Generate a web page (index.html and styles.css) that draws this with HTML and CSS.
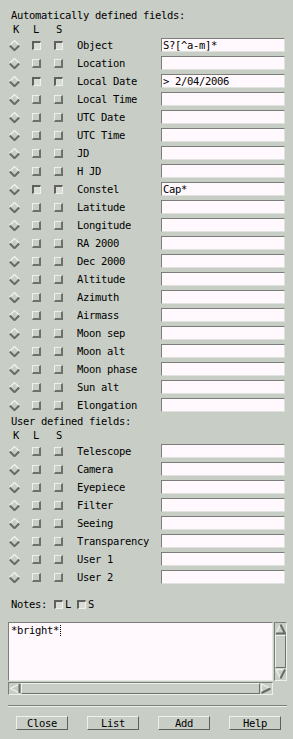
FILE: index.html
```html
<!DOCTYPE html>
<html>
<head>
<meta charset="utf-8">
<link rel="stylesheet" href="styles.css">
</head>
<body>
<div class="panel">
  <div class="title">Automatically defined fields:</div>
  <div class="row head"><span class="k">K</span><span class="l">L</span><span class="s">S</span></div>

  <div class="row"><svg class="dia" viewBox="0 0 11 11"><polyline points="0.5,5.5 5.5,0.5 10.5,5.5" class="hi"/><polyline points="0.8,5.5 5.5,10.2 10.2,5.5" class="lo"/></svg><span class="cb on"></span><span class="cb on"></span><span class="lab">Object</span><div class="entry">S?[^a-m]*</div></div>
  <div class="row"><svg class="dia" viewBox="0 0 11 11"><polyline points="0.5,5.5 5.5,0.5 10.5,5.5" class="hi"/><polyline points="0.8,5.5 5.5,10.2 10.2,5.5" class="lo"/></svg><span class="cb"></span><span class="cb"></span><span class="lab">Location</span><div class="entry"></div></div>
  <div class="row"><svg class="dia" viewBox="0 0 11 11"><polyline points="0.5,5.5 5.5,0.5 10.5,5.5" class="hi"/><polyline points="0.8,5.5 5.5,10.2 10.2,5.5" class="lo"/></svg><span class="cb on"></span><span class="cb on"></span><span class="lab">Local Date</span><div class="entry">&gt; 2/04/2006</div></div>
  <div class="row"><svg class="dia" viewBox="0 0 11 11"><polyline points="0.5,5.5 5.5,0.5 10.5,5.5" class="hi"/><polyline points="0.8,5.5 5.5,10.2 10.2,5.5" class="lo"/></svg><span class="cb"></span><span class="cb"></span><span class="lab">Local Time</span><div class="entry"></div></div>
  <div class="row"><svg class="dia" viewBox="0 0 11 11"><polyline points="0.5,5.5 5.5,0.5 10.5,5.5" class="hi"/><polyline points="0.8,5.5 5.5,10.2 10.2,5.5" class="lo"/></svg><span class="cb"></span><span class="cb"></span><span class="lab">UTC Date</span><div class="entry"></div></div>
  <div class="row"><svg class="dia" viewBox="0 0 11 11"><polyline points="0.5,5.5 5.5,0.5 10.5,5.5" class="hi"/><polyline points="0.8,5.5 5.5,10.2 10.2,5.5" class="lo"/></svg><span class="cb"></span><span class="cb"></span><span class="lab">UTC Time</span><div class="entry"></div></div>
  <div class="row"><svg class="dia" viewBox="0 0 11 11"><polyline points="0.5,5.5 5.5,0.5 10.5,5.5" class="hi"/><polyline points="0.8,5.5 5.5,10.2 10.2,5.5" class="lo"/></svg><span class="cb"></span><span class="cb"></span><span class="lab">JD</span><div class="entry"></div></div>
  <div class="row"><svg class="dia" viewBox="0 0 11 11"><polyline points="0.5,5.5 5.5,0.5 10.5,5.5" class="hi"/><polyline points="0.8,5.5 5.5,10.2 10.2,5.5" class="lo"/></svg><span class="cb"></span><span class="cb"></span><span class="lab">H JD</span><div class="entry"></div></div>
  <div class="row"><svg class="dia" viewBox="0 0 11 11"><polyline points="0.5,5.5 5.5,0.5 10.5,5.5" class="hi"/><polyline points="0.8,5.5 5.5,10.2 10.2,5.5" class="lo"/></svg><span class="cb on"></span><span class="cb on"></span><span class="lab">Constel</span><div class="entry">Cap*</div></div>
  <div class="row"><svg class="dia" viewBox="0 0 11 11"><polyline points="0.5,5.5 5.5,0.5 10.5,5.5" class="hi"/><polyline points="0.8,5.5 5.5,10.2 10.2,5.5" class="lo"/></svg><span class="cb"></span><span class="cb"></span><span class="lab">Latitude</span><div class="entry"></div></div>
  <div class="row"><svg class="dia" viewBox="0 0 11 11"><polyline points="0.5,5.5 5.5,0.5 10.5,5.5" class="hi"/><polyline points="0.8,5.5 5.5,10.2 10.2,5.5" class="lo"/></svg><span class="cb"></span><span class="cb"></span><span class="lab">Longitude</span><div class="entry"></div></div>
  <div class="row"><svg class="dia" viewBox="0 0 11 11"><polyline points="0.5,5.5 5.5,0.5 10.5,5.5" class="hi"/><polyline points="0.8,5.5 5.5,10.2 10.2,5.5" class="lo"/></svg><span class="cb"></span><span class="cb"></span><span class="lab">RA 2000</span><div class="entry"></div></div>
  <div class="row"><svg class="dia" viewBox="0 0 11 11"><polyline points="0.5,5.5 5.5,0.5 10.5,5.5" class="hi"/><polyline points="0.8,5.5 5.5,10.2 10.2,5.5" class="lo"/></svg><span class="cb"></span><span class="cb"></span><span class="lab">Dec 2000</span><div class="entry"></div></div>
  <div class="row"><svg class="dia" viewBox="0 0 11 11"><polyline points="0.5,5.5 5.5,0.5 10.5,5.5" class="hi"/><polyline points="0.8,5.5 5.5,10.2 10.2,5.5" class="lo"/></svg><span class="cb"></span><span class="cb"></span><span class="lab">Altitude</span><div class="entry"></div></div>
  <div class="row"><svg class="dia" viewBox="0 0 11 11"><polyline points="0.5,5.5 5.5,0.5 10.5,5.5" class="hi"/><polyline points="0.8,5.5 5.5,10.2 10.2,5.5" class="lo"/></svg><span class="cb"></span><span class="cb"></span><span class="lab">Azimuth</span><div class="entry"></div></div>
  <div class="row"><svg class="dia" viewBox="0 0 11 11"><polyline points="0.5,5.5 5.5,0.5 10.5,5.5" class="hi"/><polyline points="0.8,5.5 5.5,10.2 10.2,5.5" class="lo"/></svg><span class="cb"></span><span class="cb"></span><span class="lab">Airmass</span><div class="entry"></div></div>
  <div class="row"><svg class="dia" viewBox="0 0 11 11"><polyline points="0.5,5.5 5.5,0.5 10.5,5.5" class="hi"/><polyline points="0.8,5.5 5.5,10.2 10.2,5.5" class="lo"/></svg><span class="cb"></span><span class="cb"></span><span class="lab">Moon sep</span><div class="entry"></div></div>
  <div class="row"><svg class="dia" viewBox="0 0 11 11"><polyline points="0.5,5.5 5.5,0.5 10.5,5.5" class="hi"/><polyline points="0.8,5.5 5.5,10.2 10.2,5.5" class="lo"/></svg><span class="cb"></span><span class="cb"></span><span class="lab">Moon alt</span><div class="entry"></div></div>
  <div class="row"><svg class="dia" viewBox="0 0 11 11"><polyline points="0.5,5.5 5.5,0.5 10.5,5.5" class="hi"/><polyline points="0.8,5.5 5.5,10.2 10.2,5.5" class="lo"/></svg><span class="cb"></span><span class="cb"></span><span class="lab">Moon phase</span><div class="entry"></div></div>
  <div class="row"><svg class="dia" viewBox="0 0 11 11"><polyline points="0.5,5.5 5.5,0.5 10.5,5.5" class="hi"/><polyline points="0.8,5.5 5.5,10.2 10.2,5.5" class="lo"/></svg><span class="cb"></span><span class="cb"></span><span class="lab">Sun alt</span><div class="entry"></div></div>
  <div class="row"><svg class="dia" viewBox="0 0 11 11"><polyline points="0.5,5.5 5.5,0.5 10.5,5.5" class="hi"/><polyline points="0.8,5.5 5.5,10.2 10.2,5.5" class="lo"/></svg><span class="cb"></span><span class="cb"></span><span class="lab">Elongation</span><div class="entry"></div></div>

  <div class="title">User defined fields:</div>
  <div class="row head"><span class="k">K</span><span class="l">L</span><span class="s">S</span></div>

  <div class="row"><svg class="dia" viewBox="0 0 11 11"><polyline points="0.5,5.5 5.5,0.5 10.5,5.5" class="hi"/><polyline points="0.8,5.5 5.5,10.2 10.2,5.5" class="lo"/></svg><span class="cb"></span><span class="cb"></span><span class="lab">Telescope</span><div class="entry"></div></div>
  <div class="row"><svg class="dia" viewBox="0 0 11 11"><polyline points="0.5,5.5 5.5,0.5 10.5,5.5" class="hi"/><polyline points="0.8,5.5 5.5,10.2 10.2,5.5" class="lo"/></svg><span class="cb"></span><span class="cb"></span><span class="lab">Camera</span><div class="entry"></div></div>
  <div class="row"><svg class="dia" viewBox="0 0 11 11"><polyline points="0.5,5.5 5.5,0.5 10.5,5.5" class="hi"/><polyline points="0.8,5.5 5.5,10.2 10.2,5.5" class="lo"/></svg><span class="cb"></span><span class="cb"></span><span class="lab">Eyepiece</span><div class="entry"></div></div>
  <div class="row"><svg class="dia" viewBox="0 0 11 11"><polyline points="0.5,5.5 5.5,0.5 10.5,5.5" class="hi"/><polyline points="0.8,5.5 5.5,10.2 10.2,5.5" class="lo"/></svg><span class="cb"></span><span class="cb"></span><span class="lab">Filter</span><div class="entry"></div></div>
  <div class="row"><svg class="dia" viewBox="0 0 11 11"><polyline points="0.5,5.5 5.5,0.5 10.5,5.5" class="hi"/><polyline points="0.8,5.5 5.5,10.2 10.2,5.5" class="lo"/></svg><span class="cb"></span><span class="cb"></span><span class="lab">Seeing</span><div class="entry"></div></div>
  <div class="row"><svg class="dia" viewBox="0 0 11 11"><polyline points="0.5,5.5 5.5,0.5 10.5,5.5" class="hi"/><polyline points="0.8,5.5 5.5,10.2 10.2,5.5" class="lo"/></svg><span class="cb"></span><span class="cb"></span><span class="lab">Transparency</span><div class="entry"></div></div>
  <div class="row"><svg class="dia" viewBox="0 0 11 11"><polyline points="0.5,5.5 5.5,0.5 10.5,5.5" class="hi"/><polyline points="0.8,5.5 5.5,10.2 10.2,5.5" class="lo"/></svg><span class="cb"></span><span class="cb"></span><span class="lab">User 1</span><div class="entry"></div></div>
  <div class="row"><svg class="dia" viewBox="0 0 11 11"><polyline points="0.5,5.5 5.5,0.5 10.5,5.5" class="hi"/><polyline points="0.8,5.5 5.5,10.2 10.2,5.5" class="lo"/></svg><span class="cb"></span><span class="cb"></span><span class="lab">User 2</span><div class="entry"></div></div>

  <div class="notes"><span>Notes:</span><span class="cb on n1"></span><span class="nl">L</span><span class="cb on n2"></span><span class="nl">S</span></div>

  <div class="textwrap">
    <div class="text">*bright*<span class="caret"></span></div>
    <div class="vscroll">
      <svg class="arr" viewBox="0 0 11 12"><polyline points="1,10.5 5.5,1.5" class="hi"/><polyline points="5.5,1.5 10,10.5 1,10.5" class="lo"/></svg>
      <div class="vslider"></div>
      <svg class="arr" viewBox="0 0 11 12"><polyline points="10,1.5 1,1.5 5.5,10.5" class="hi"/><polyline points="5.5,10.5 10,1.5" class="lo"/></svg>
    </div>
    <div class="hscroll">
      <svg class="arrh" viewBox="0 0 12 11"><polyline points="10.5,1 1.5,5.5 10.5,10" class="hi"/><polyline points="10.5,1 10.5,10" class="lo"/></svg>
      <div class="hslider"></div>
      <svg class="arrh" viewBox="0 0 12 11"><polyline points="1.5,10 1.5,1 10.5,5.5" class="hi"/><polyline points="10.5,5.5 1.5,10" class="lo"/></svg>
    </div>
  </div>

  <div class="sep"></div>

  <div class="buttons">
    <div class="btn">Close</div>
    <div class="btn">List</div>
    <div class="btn">Add</div>
    <div class="btn">Help</div>
  </div>
</div>
</body>
</html>
```

FILE: styles.css
```css
html, body {
  margin: 0;
  padding: 0;
}
body {
  width: 293px;
  height: 739px;
  overflow: hidden;
  background: #c8cec6;
  color: #000;
  font-family: "DejaVu Sans Mono", "Liberation Mono", monospace;
  font-size: 10.5px;
  letter-spacing: -0.32px;
}
.panel {
  padding-top: 8px;
}
.title {
  height: 14px;
  line-height: 14px;
  padding-left: 11px;
  white-space: pre;
}
.row {
  display: grid;
  grid-template-columns: 23px 22px 23px 84px 124px;
  padding-left: 9px;
  height: 18px;
  align-items: center;
  white-space: pre;
}
.row.head {
  height: 14px;
  line-height: 14px;
}
.head .k { padding-left: 4px; }
.head .l { padding-left: 1px; }
.head .s { padding-left: 2px; }

.dia {
  width: 11px;
  height: 11px;
  display: block;
}
.dia polyline, .arr polyline, .arrh polyline {
  fill: none;
  stroke-linejoin: miter;
}
.hi {
  stroke: #f0f2ee;
  stroke-width: 1.3;
}
.lo {
  stroke: #686a66;
  stroke-width: 2;
}

.cb {
  display: block;
  width: 9px;
  height: 9px;
  box-sizing: border-box;
  border-style: solid;
  border-width: 1px 2px 2px 1px;
  border-color: #eef0ec #6e706c #6e706c #eef0ec;
  background: #c8cec6;
}
.cb.on {
  border-width: 2px 1px 1px 2px;
  border-color: #5e605c #eef0ec #eef0ec #5e605c;
  background: #dadcd8;
}

.lab {
  line-height: 14px;
}
.entry {
  height: 14px;
  box-sizing: border-box;
  background: #fff8fd;
  border-style: solid;
  border-width: 1px;
  border-color: #7c7e7a #dfe2dd #dfe2dd #7c7e7a;
  line-height: 12px;
  padding-left: 1px;
  overflow: hidden;
}

.notes {
  display: flex;
  align-items: center;
  height: 18px;
  margin-top: 9px;
  padding-left: 11px;
}
.notes .n1 { margin-left: 7px; }
.notes .n2 { margin-left: 6px; }
.notes .nl { margin-left: 2px; }

.textwrap {
  display: grid;
  grid-template-columns: 265px 13px;
  grid-template-rows: 59px 13px;
  column-gap: 1px;
  row-gap: 1px;
  margin-top: 9px;
  padding-left: 8px;
}
.text {
  box-sizing: border-box;
  background: #fff8fd;
  border-style: solid;
  border-width: 1px;
  border-color: #7c7e7a #e6e9e4 #e6e9e4 #7c7e7a;
  padding: 1px 0 0 2px;
  line-height: 12px;
  white-space: pre;
}
.caret {
  display: inline-block;
  width: 1px;
  height: 11px;
  vertical-align: -2px;
  margin-left: 1px;
  background: repeating-linear-gradient(to bottom, #000 0 1px, transparent 1px 2px);
}
.vscroll {
  box-sizing: border-box;
  display: flex;
  flex-direction: column;
  border-style: solid;
  border-width: 1px;
  border-color: #7c7e7a #eef0ec #eef0ec #7c7e7a;
}
.arr {
  display: block;
  width: 11px;
  height: 12px;
  flex: none;
}
.vslider {
  flex: 1;
  box-sizing: border-box;
  border-style: solid;
  border-width: 1px;
  border-color: #eef0ec #6e706c #6e706c #eef0ec;
}
.hscroll {
  box-sizing: border-box;
  display: flex;
  border-style: solid;
  border-width: 1px;
  border-color: #7c7e7a #eef0ec #eef0ec #7c7e7a;
}
.arrh {
  display: block;
  width: 12px;
  height: 11px;
  flex: none;
}
.hslider {
  flex: 1;
  box-sizing: border-box;
  border-style: solid;
  border-width: 1px;
  border-color: #eef0ec #6e706c #6e706c #eef0ec;
}

.sep {
  margin: 10px 6px 0 8px;
  height: 0;
  border-top: 1px solid #7c7e7a;
  border-bottom: 1px solid #eef0ec;
}

.buttons {
  display: flex;
  gap: 19px;
  padding-left: 16px;
  margin-top: 9px;
}
.btn {
  width: 52px;
  height: 14px;
  box-sizing: border-box;
  border-style: solid;
  border-width: 1px;
  border-color: #eef0ec #5e605c #5e605c #eef0ec;
  text-align: center;
  line-height: 12px;
  white-space: pre;
}
```
